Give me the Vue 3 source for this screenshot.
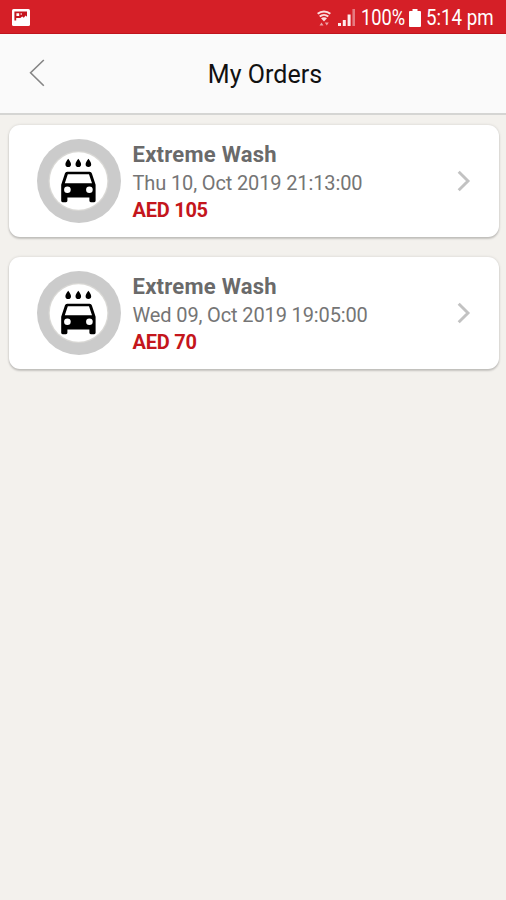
<script setup>
import { ref } from 'vue'

const time = ref('5:14 pm')
const battery = ref(100)

const orders = ref([
  { id: 1, name: 'Extreme Wash', date: 'Thu 10, Oct 2019 21:13:00', price: 105 },
  { id: 2, name: 'Extreme Wash', date: 'Wed 09, Oct 2019 19:05:00', price: 70 },
])
</script>

<template>
  <div class="screen">
    <div class="status-bar">
      <svg class="picture" viewBox="0 0 18 17" aria-hidden="true">
        <rect width="18" height="17" rx="1.6" fill="#fff" />
        <path
          d="M2.4 2.6H15v5.2l-1.4-1.2-1.8 2.2-1.6-1.4-1.8 1.6H4.2v2.6H2.4z"
          fill="#c5161f"
        />
        <path d="M4.4 4.3h2.8v2.6H4.4zM8.6 4.2h1.2v1.6H8.6z" fill="#fff" />
      </svg>

      <svg class="wifi" viewBox="0 0 14 16" aria-hidden="true">
        <g fill="none" stroke="#fbdfe0" stroke-width="2">
          <path d="M.7 3.8C4.2.6 9.8.6 13.3 3.8" />
          <path d="M2.7 6.5c2.5-2.1 6.1-2.1 8.6 0" />
        </g>
        <path d="M4 8.2c1.8-1.2 4.2-1.2 6 0l-3 3.3z" fill="#fbdfe0" />
        <path d="M2.5 15.4l2-3 2 3zM7.8 12.4h4l-2 3z" fill="#eea3a7" />
      </svg>

      <svg class="signal" viewBox="0 0 18 17" aria-hidden="true">
        <path d="M0 14h3v3H0zM4.8 11h3v6h-3zM9.6 5.5h3V17h-3z" fill="#fdeced" />
        <path d="M14.4 0h2.6v17h-2.6z" fill="#e57a80" />
      </svg>

      <span class="percent"><span>{{ battery }}%</span></span>

      <svg class="battery" viewBox="0 0 12 18" aria-hidden="true">
        <path
          d="M3.5 0h5v2H11a1 1 0 0 1 1 1v14a1 1 0 0 1-1 1H1a1 1 0 0 1-1-1V3a1 1 0 0 1 1-1h2.5z"
          fill="#fff"
        />
      </svg>

      <span class="time"><span>{{ time }}</span></span>
    </div>

    <header class="header">
      <button class="back" type="button" aria-label="Back">
        <svg viewBox="0 0 16 28" aria-hidden="true">
          <path d="M14.8 1L1.6 13.8l13.2 13" fill="none" stroke="#858585" stroke-width="1.6" />
        </svg>
      </button>
      <h1>My Orders</h1>
    </header>

    <main class="orders">
      <article v-for="order in orders" :key="order.id" class="order">
        <svg class="badge" viewBox="0 0 84 84" aria-hidden="true">
          <circle cx="42" cy="42" r="42" fill="#cbcbcb" />
          <circle cx="41.5" cy="42" r="30" fill="#d9d8d5" />
          <circle cx="41.5" cy="42" r="28.8" fill="#fff" />
          <g transform="translate(-0.6 0)">
            <!-- water drops -->
            <g fill="#000">
              <path d="M31.8 19.8c1.6 2.2 2.8 3.8 2.8 5.5a2.8 2.8 0 0 1-5.6 0c0-1.7 1.2-3.3 2.8-5.5z" />
              <path d="M41.9 19.8c1.6 2.2 2.8 3.8 2.8 5.5a2.8 2.8 0 0 1-5.6 0c0-1.7 1.2-3.3 2.8-5.5z" />
              <path d="M52 19.8c1.6 2.2 2.8 3.8 2.8 5.5a2.8 2.8 0 0 1-5.6 0c0-1.7 1.2-3.3 2.8-5.5z" />
            </g>
            <!-- car -->
            <path
              fill="#000"
              fill-rule="evenodd"
              d="M30.8 32.8h22.4a2.4 2.4 0 0 1 2.3 1.7l3.7 11.3v16a1.4 1.4 0 0 1-1.4 1.4h-3.4a1.4 1.4 0 0 1-1.4-1.4v-3.2H31v3.2a1.4 1.4 0 0 1-1.4 1.4h-3.4a1.4 1.4 0 0 1-1.4-1.4v-16l3.7-11.3a2.4 2.4 0 0 1 2.3-1.7zM31.4 35.2l-3 9h27.2l-3-9z"
            />
            <circle cx="31" cy="50.7" r="3.3" fill="#fff" />
            <circle cx="53" cy="50.7" r="3.3" fill="#fff" />
          </g>
        </svg>

        <div class="info">
          <h2>{{ order.name }}</h2>
          <p class="date">{{ order.date }}</p>
          <p class="price">AED {{ order.price }}</p>
        </div>

        <svg class="chevron" viewBox="0 0 14 22" aria-hidden="true">
          <path d="M1.7 1.8L11 11l-9.3 9.2" fill="none" stroke="#c2c2c2" stroke-width="2.9" />
        </svg>
      </article>
    </main>
  </div>
</template>

<style>
body {
  background: #f3f1ed;
}
</style>

<style scoped>
.screen {
  min-height: 900px;
  background: #f3f1ed;
  font-family: Roboto, 'Liberation Sans', sans-serif;
}

.status-bar {
  box-sizing: border-box;
  height: 34px;
  display: flex;
  align-items: center;
  padding: 2px 13px 0 12px;
  border-bottom: 1px solid #c0151d;
  background: #d51f27;
  color: #fff;
  font-size: 21.5px;
  line-height: 30px;
  white-space: nowrap;
}

.picture {
  width: 18px;
  height: 17px;
}

.wifi {
  width: 14px;
  height: 16px;
  margin-left: auto;
}

.signal {
  width: 18px;
  height: 17px;
  margin-left: 7px;
}

/* the status text is set narrow */
.percent span,
.time span {
  display: inline-block;
  transform: scaleX(0.85);
  transform-origin: left center;
}

.percent {
  width: 44px;
  margin-left: 5px;
}

.battery {
  width: 12px;
  height: 18px;
  margin-left: 4px;
}

.time {
  width: 67px;
  margin-left: 5px;
}

.time span {
  transform: scaleX(0.87);
}

.header {
  box-sizing: border-box;
  height: 81px;
  display: grid;
  grid-template-columns: 60px 1fr 60px;
  align-items: center;
  padding: 0 12px;
  border-bottom: 2px solid #d5d5d3;
  background: #fafafa;
}

.back {
  width: 16px;
  height: 28px;
  margin: 0 0 1px 17px;
  padding: 0;
  border: 0;
  background: transparent;
}

.back svg {
  width: 16px;
  height: 28px;
  display: block;
}

.header h1 {
  margin: 2px 0 0 24px;
  color: #111;
  font-size: 25px;
  line-height: 30px;
  font-weight: 400;
  letter-spacing: 0.05px;
  text-align: center;
}

.orders {
  display: grid;
  gap: 20px;
  padding: 9.5px 7px 0 9px;
}

.order {
  box-sizing: border-box;
  height: 112px;
  display: flex;
  align-items: center;
  padding: 0 28px;
  border-radius: 11px;
  background: #fff;
  box-shadow:
    0 2px 2px rgba(0, 0, 0, 0.17),
    0 0 3px rgba(0, 0, 0, 0.14);
}

.badge {
  width: 84px;
  height: 84px;
}

.info {
  flex: 1;
  margin: 3px 0 0 11.5px;
  white-space: nowrap;
}

.info h2 {
  margin: 0;
  color: #6a6a6a;
  font-size: 22px;
  line-height: 30px;
  font-weight: 700;
  letter-spacing: 0.25px;
}

.info p {
  margin: 0;
  font-size: 20px;
  line-height: 27px;
  letter-spacing: -0.13px;
}

.info .date {
  color: #757575;
}

.info .price {
  color: #c4161c;
  font-weight: 700;
  letter-spacing: -0.25px;
}

.chevron {
  width: 14px;
  height: 22px;
}
</style>
